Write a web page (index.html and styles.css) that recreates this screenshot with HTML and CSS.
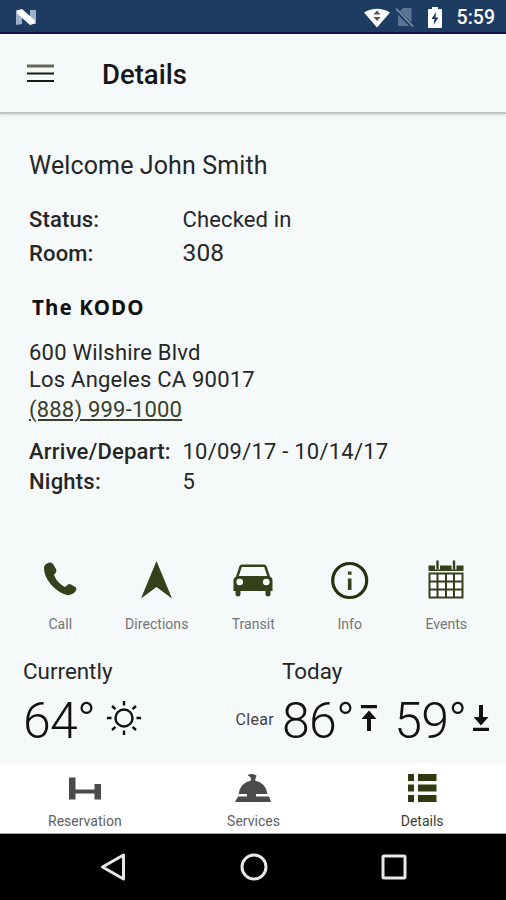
FILE: index.html
```html
<!DOCTYPE html>
<html lang="en">
<head>
<meta charset="utf-8">
<title>Details</title>
<link rel="stylesheet" href="styles.css">
</head>
<body>
<div class="phone">
  <div class="status">
    <svg class="nougat" width="24" height="20" viewBox="0 0 24 20"><path d="M2 2l6 2v12l-6 1zM16 2h6v14l-6-2z" fill="#9fb0c8"/><path d="M3 2.500L8 1l13 11.500v3L16 17 3 5.500z" fill="#fff"/></svg>
    <svg class="wifi" width="26" height="22" viewBox="0 0 26 22"><path d="M0 5.500Q13-2 26 5.500L13 20.500z" fill="#fff"/><path d="M13 3.500l3.500 4h-7zM13 14l3.500-4h-7z" fill="#555"/></svg>
    <svg class="sim" width="19" height="21" viewBox="0 0 19 21"><path d="M8 1h8.500v18H3V6z" fill="#5a7493"/><path d="M0 2l18 18" stroke="#1e3c62" stroke-width="4"/><path d="M1 1.500l17 18" stroke="#8194ac" stroke-width="1.500"/></svg>
    <svg class="battery" width="14" height="22" viewBox="0 0 14 22"><path d="M4 0h6v2h3q1 0 1 1v17q0 1-1 1H1q-1 0-1-1V3q0-1 1-1h3z" fill="#fff"/><path d="M8 5L3.500 12h3L5.500 18l5-7.500h-3z" fill="#1e3c62"/></svg>
    <span class="clock">5:59</span>
  </div>
  <header class="appbar">
    <svg width="27" height="19" viewBox="0 0 27 19"><path d="M0 2h27" stroke="#66665a" stroke-width="3"/><path d="M0 9.500h27M0 17h27" stroke="#161a14" stroke-width="2.200"/></svg>
    <h1 class="title">Details</h1>
  </header>
  <main class="main">
    <p class="welcome">Welcome John Smith</p>
    <dl class="facts">
      <dt>Status:</dt><dd class="checked">Checked in</dd>
      <dt class="room">Room:</dt><dd class="number">308</dd>
    </dl>
    <h2 class="hotel">The KODO</h2>
    <div class="address"><div class="street">600 Wilshire Blvd</div><div class="city">Los Angeles CA 90017</div></div>
    <a class="tel">(888) 999-1000</a>
    <dl class="facts stay">
      <dt class="arrive">Arrive/Depart:</dt><dd class="dates">10/09/17 - 10/14/17</dd>
      <dt>Nights:</dt><dd class="nights">5</dd>
    </dl>
    <div class="actions">
      <div class="action"><svg viewBox="0 0 44 44"><path d="M6 9C6 6 9 4 11.500 3.500Q14 3 15 5L18 10Q19 13 17 14.500L16 16Q19 24 27 28L30 25.500Q31.500 24.500 33 25.500L38 28.500Q39 30.500 37 33Q33 37 29 36C17 33 6 20 6 9z"/></svg><span>Call</span></div>
      <div class="action directions"><svg viewBox="0 0 44 44"><path d="M21.500 2L37 39.500 21.500 28 6 39.500z"/></svg><span>Directions</span></div>
      <div class="action transit"><svg viewBox="0 0 44 44"><path fill-rule="evenodd" d="M8.500 7Q9 5.500 11 5.500H33Q35 5.500 35.500 7L39 17.500Q41.500 18.500 41.500 21V32H39.500V35.500Q39.500 37.500 37 37.500Q34.500 37.500 34.500 35.500V32H9.500V35.500Q9.500 37.500 7 37.500Q4.500 37.500 4.500 35.500V32H2.500V21Q2.500 18.500 5 17.500zM10.800 8L7.800 17H36.200L33.200 8z"/><circle cx="8.700" cy="23" r="3.300" fill="#fff"/><circle cx="35.300" cy="23" r="3.300" fill="#fff"/></svg><span>Transit</span></div>
      <div class="action info"><svg viewBox="0 0 44 44"><circle cx="21.700" cy="21.500" r="17" fill="none" stroke="#28310e" stroke-width="3.200"/><path d="M19.900 12.500h3.600v3.200h-3.600zM19.900 19.500h3.600v11.500h-3.600z"/></svg><span>Info</span></div>
      <div class="action events"><svg viewBox="0 0 44 44"><path d="M4.500 6.500h35v5.500h-35z"/><path d="M4.500 14.500h35v24h-35z" fill="#fff"/><path d="M5.500 14.500v24h33v-24zM13.500 14.500v24M22 14.500v24M30 14.500v24M5.500 22.500h33M5.500 30.500h33" fill="none" stroke="#353e1c" stroke-width="2"/><path d="M13.500 1.500v9M30 1.500v9" stroke="#f5f9fa" stroke-width="5"/><path d="M13.500 1.500v9M30 1.500v9" stroke="#353e1c" stroke-width="2.400"/></svg><span>Events</span></div>
    </div>
    <div class="weather">
      <section class="now">
        <h3>Currently</h3>
        <div class="reading"><span class="temp">64°</span>
          <svg class="sun" width="34" height="34" viewBox="0 0 34 34" fill="none" stroke="#111"><circle cx="17" cy="17" r="8.500" stroke-width="2.400"/><path stroke-width="2.400" d="M17 0v4.500M17 29.500V34M0 17h4.500M29.500 17H34M5 5l3.500 3.200M29 5l-3.500 3.200M5 29l3.500-3.200M29 29l-3.500-3.200"/></svg>
          <span class="sky">Clear</span></div>
      </section>
      <section class="today">
        <h3>Today</h3>
        <div class="reading"><span class="temp">86°</span>
          <svg class="high" width="16" height="26" viewBox="0 0 16 26"><path d="M0 0h16v3.200H0zM8 5.500l7.500 8.500H10v12H6V14H.5z" fill="#111"/></svg>
          <span class="temp low">59°</span>
          <svg class="down" width="16" height="26" viewBox="0 0 16 26"><path d="M0 22.800h16V26H0zM8 20.500l7.500-8.500H10V0H6v12H.5z" fill="#111"/></svg></div>
      </section>
    </div>
  </main>
  <nav class="tabs">
    <div class="tab"><svg width="34" height="30" viewBox="0 0 34 30" fill="#4b4b4b"><path d="M1 4.500h6.500v22H1zM26.500 11h6.500v15.500h-6.500zM7 16.500h20v4H7z"/></svg><span class="t1">Reservation</span></div>
    <div class="tab"><svg width="38" height="30" viewBox="0 0 38 30" fill="#4b4b4b"><path d="M13.500 2.500Q15 .5 18 1Q21 1.500 22.500 2.500L21 7.500Q32 10 33.500 21H22v2.500h13L37 29H1l3-5.500h9V21H4.500Q6 10 17 7.500L16.500 4z"/></svg><span class="t2">Services</span></div>
    <div class="tab active"><svg width="30" height="30" viewBox="0 0 30 30" fill="#303a10"><path d="M1 1h6v7H1zM11 1h18.500v7H11zM1 11.500h6v7H1zM11 11.500h18.500v7H11zM1 22h6v7H1zM11 22h18.500v7H11z"/></svg><span class="t3">Details</span></div>
  </nav>
  <div class="system">
    <svg width="28" height="30" viewBox="0 0 28 30"><path d="M24.500 3v24L3.500 15z"/></svg>
    <svg width="30" height="30" viewBox="0 0 30 30"><circle cx="15" cy="15" r="12"/></svg>
    <svg width="28" height="28" viewBox="0 0 28 28"><rect x="3" y="3" width="22" height="22" rx="1"/></svg>
  </div>
</div>
</body>
</html>
```

FILE: styles.css
```css
* { box-sizing: border-box; margin: 0; padding: 0; }
body { width: 506px; height: 900px; overflow: hidden; font-family: Roboto, "Liberation Sans", sans-serif; color: #252727; background: #f5f9fa; }
svg { display: block; flex: none; }
.phone { display: flex; flex-direction: column; width: 506px; height: 900px; }
.status { display: flex; align-items: center; height: 34px; padding: 3px 11px 0 14px; background: #1e3c62; border-bottom: 2px solid #11114d; }
.nougat { margin-right: auto; }
.wifi { margin-right: -2px; }
.sim { margin-left: 7px; }
.battery { margin-left: 14px; }
.clock { margin-left: 15px; color: #fff; font-size: 19.500px; font-weight: 500; line-height: 32px; }
.appbar { display: flex; align-items: center; height: 80px; padding: 0 27px; border-bottom: 2px solid #c1c6c7; box-shadow: 0 1px 3px #0002; }
.title { margin: 3px 0 0 48px; font-size: 27.500px; font-weight: 500; line-height: 32px; color: #151717; }
.main { height: 649px; padding-top: 37px; }
.welcome { padding-left: 29px; font-size: 25px; line-height: 30px; letter-spacing: .12px; }
.facts { display: grid; grid-template-columns: 153.500px 1fr; padding: 22px 0 0 29px; font-size: 22px; line-height: 34px; letter-spacing: .15px; white-space: nowrap; }
.facts dt { font-weight: 500; }
.number { font-size: 24.500px; line-height: 32px; }
.hotel { padding: 22px 0 0 32px; font: bold 20.500px/28px "Noto Sans", sans-serif; letter-spacing: 1.150px; color: #111; }
.address { padding: 18px 0 0 29px; font-size: 22px; line-height: 27px; letter-spacing: .22px; }
.tel { display: block; margin: 2px 0 0 29px; font-size: 22px; line-height: 30px; letter-spacing: .2px; color: #37402b; text-decoration: underline; text-decoration-thickness: 1.500px; text-underline-offset: 2px; }
.stay { padding-top: 12px; line-height: 30px; letter-spacing: .22px; }
.actions { display: grid; grid-template-columns: repeat(5, 96.500px); height: 75px; margin: 61px 0 0 12px; }
.action { display: flex; flex-direction: column; align-items: center; font-size: 14px; line-height: 18px; color: #737676; letter-spacing: .05px; }
.action svg { width: 44px; height: 44px; margin: .5px 0 12.500px; fill: #36401a; }
.weather { display: grid; grid-template-columns: 259px 1fr; margin-top: 25px; padding-left: 23px; }
.weather h3 { font-size: 22.400px; font-weight: 400; line-height: 26px; }
.reading { display: flex; align-items: flex-start; height: 61px; padding-top: 12px; }
.temp { font-size: 50px; font-weight: 300; line-height: 50px; letter-spacing: -.7px; color: #111; }
.sun { margin: 5px 0 0 12px; }
.sky { margin: 14px 8px 0 auto; font-size: 16px; line-height: 20px; letter-spacing: .3px; color: #444; }
.high, .down { margin: 9px 0 0 7px; }
.down { margin-left: 6px; }
.low { margin-left: 17px; }
.tabs { display: grid; grid-template-columns: repeat(3, 1fr); height: 71px; padding-top: 10px; background: #fff; border-bottom: 1px solid #aaa; }
.tab { display: flex; flex-direction: column; align-items: center; font-size: 14px; line-height: 18px; color: #5f5f5f; padding-left: 1px; }
.tab svg { margin-bottom: 9px; }
.tab.active { color: #3d4232; }
.system { display: flex; justify-content: space-between; align-items: center; height: 66px; padding: 0 98px 0 99px; background: #000; }
.system svg { fill: none; stroke: #e8e8e8; stroke-width: 3; stroke-linejoin: round; }
```
